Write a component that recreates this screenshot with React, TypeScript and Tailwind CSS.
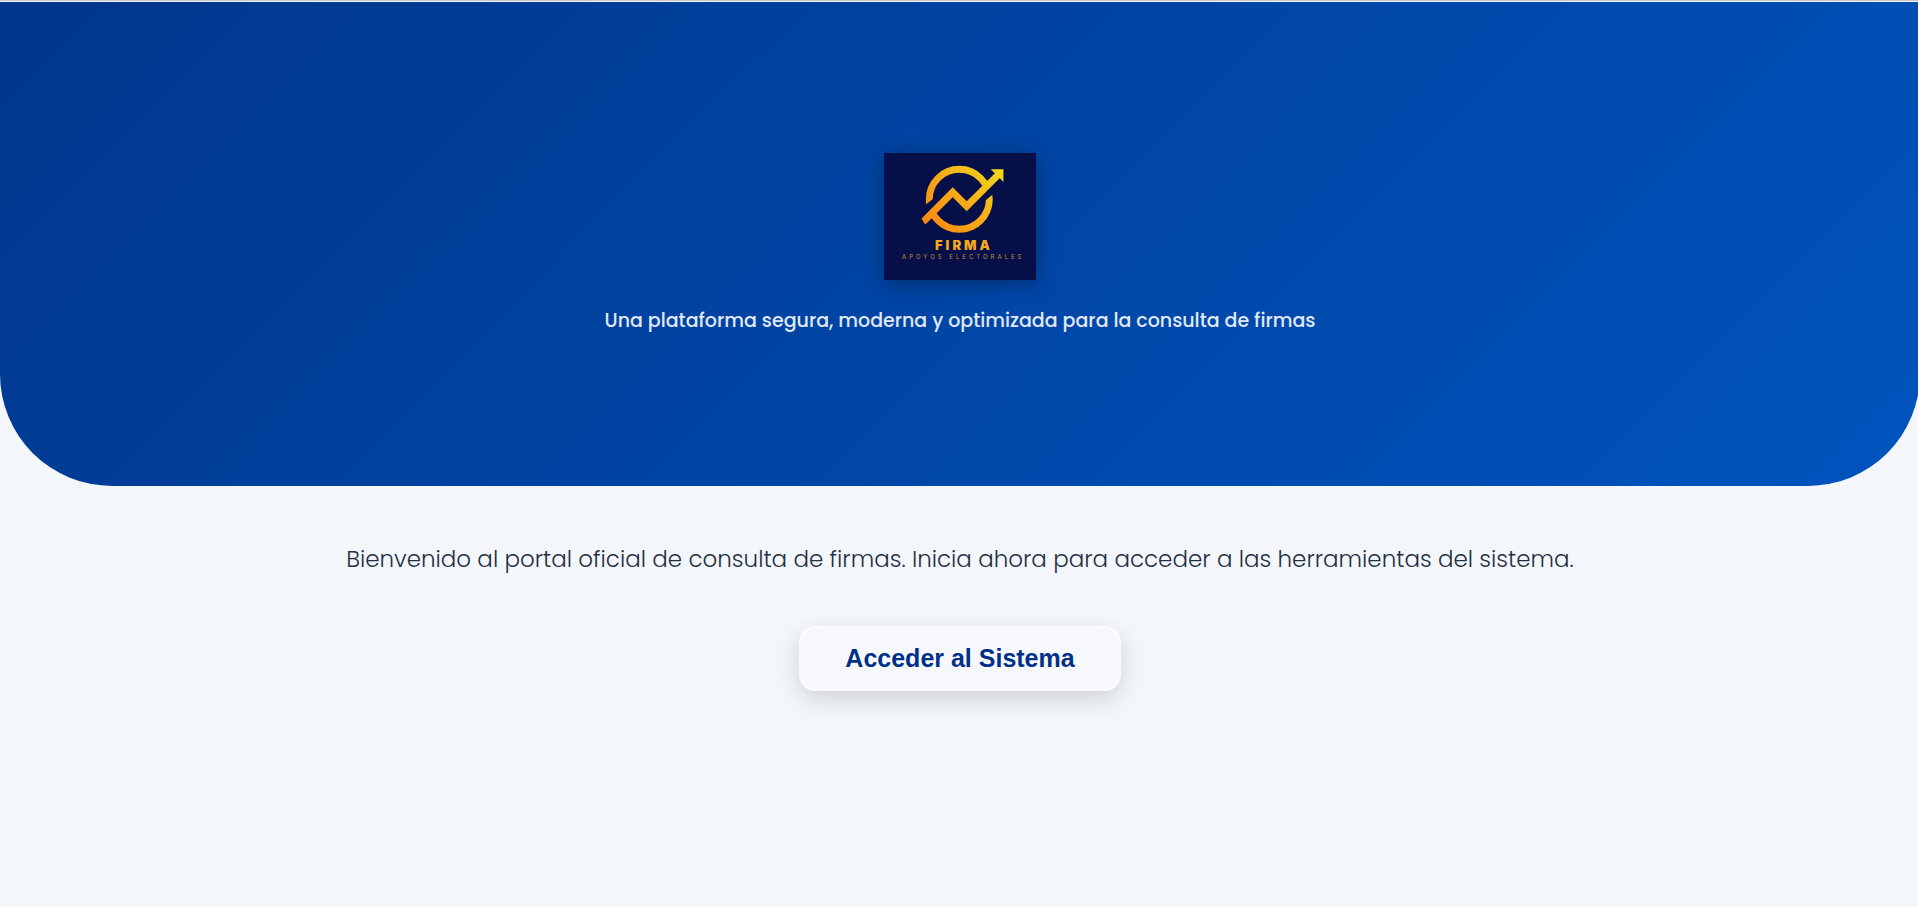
import React from 'react';

const Logo: React.FC = () => {
  return (
    <svg
      viewBox="0 0 152 127"
      role="img"
      aria-label="Firma Apoyos Electorales"
      className="w-[152px] h-[127px] bg-[#060f47] shadow-[0_4px_20px_rgba(0,0,0,0.3)]"
    >
      <defs>
        <linearGradient id="gold" gradientUnits="userSpaceOnUse" x1="46" y1="76" x2="114" y2="14">
          <stop offset="0" stopColor="#fb8712" />
          <stop offset="0.5" stopColor="#f5ad18" />
          <stop offset="1" stopColor="#f0da1c" />
        </linearGradient>
        <clipPath id="upper">
          <path d="M30 60.4 L55 41.6 L75 46 L89 46.5 L114 21.5 V0 H30 Z" />
        </clipPath>
        <clipPath id="lower">
          <path d="M40 68 L68 40 L84 62 L120 32 V90 H30 Z" />
        </clipPath>
      </defs>
      <circle cx="75.3" cy="46.3" r="30" fill="none" stroke="url(#gold)" strokeWidth="6.9" clipPath="url(#upper)" />
      <circle cx="75.3" cy="46.3" r="30" fill="none" stroke="url(#gold)" strokeWidth="6.9" clipPath="url(#lower)" />
      <path d="M40 68 L68.7 39.3 L82.7 53.3 L114.4 21.6" fill="none" stroke="url(#gold)" strokeWidth="7" />
      <path d="M37.6 65.6 L41 71.6 L45 67 Z" fill="url(#gold)" />
      <path d="M106.7 16.2 H119.4 V29 L116 25.4 L110 19.6 Z" fill="url(#gold)" />
      <text
        x="51"
        y="97"
        fill="#f5a81c"
        fontFamily="Inter, sans-serif"
        fontSize="13"
        fontWeight="900"
        letterSpacing="3"
      >
        FIRMA
      </text>
      <text
        x="18"
        y="106"
        fill="#c2923a"
        fontFamily="Inter, sans-serif"
        fontSize="6"
        letterSpacing="3"
      >
        APOYOS ELECTORALES
      </text>
    </svg>
  );
};

const App: React.FC = () => {
  return (
    <div className="min-h-screen bg-[#f3f6fb] border-t border-[#c8c8cc] font-[Poppins,Inter,sans-serif] text-center overflow-x-hidden">
      <div className="mt-px -mr-0.5">
        <header className="pt-[151px] pb-[149px] flex flex-col items-center gap-[25px] rounded-b-[112px] bg-linear-[135deg] from-[#00368c] to-[#0054be]">
          <Logo />
          <p className="text-[19px] leading-8 font-medium text-[#e0e8f5]">
            Una plataforma segura, moderna y optimizada para la consulta de firmas
          </p>
        </header>
        <main className="px-6 pt-[55px] flex flex-col items-center gap-[49px]">
          <p className="text-[23px] leading-9 font-light text-[#1f3042]">
            Bienvenido al portal oficial de consulta de firmas. Inicia ahora para acceder a las herramientas del sistema.
          </p>
          <button
            type="button"
            className="px-11 py-[14px] rounded-2xl border-2 border-[#fafbfd] bg-[#f7f8fc] font-['Liberation_Sans',Arial,sans-serif] text-[25px] leading-[33px] font-bold text-[#003087] shadow-[0_8px_24px_rgba(0,0,0,0.15)] cursor-pointer"
          >
            Acceder al Sistema
          </button>
        </main>
      </div>
    </div>
  );
};

export default App;
